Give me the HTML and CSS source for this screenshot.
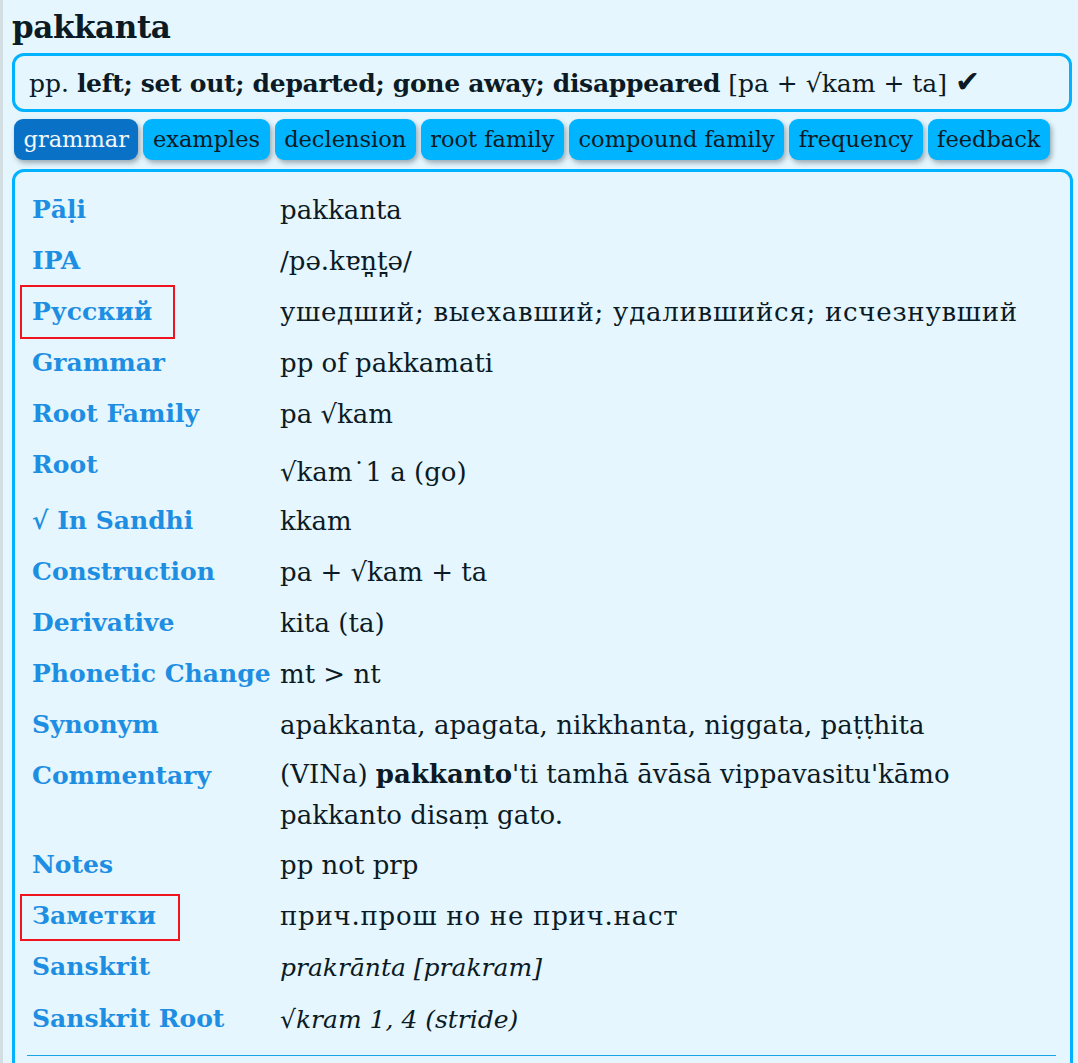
FILE: index.html
```html
<!DOCTYPE html>
<html lang="en">
<head>
<meta charset="utf-8">
<title>pakkanta</title>
<link rel="stylesheet" href="styles.css">
</head>
<body>
<div class="page">
  <h1 class="headword">pakkanta</h1>
  <div class="summary">pp. <b>left; set out; departed; gone away; disappeared</b> [pa + √kam + ta] <span class="check">✔</span></div>
  <nav class="tabs">
    <span class="tab active">grammar</span>
    <span class="tab">examples</span>
    <span class="tab">declension</span>
    <span class="tab">root family</span>
    <span class="tab">compound family</span>
    <span class="tab">frequency</span>
    <span class="tab">feedback</span>
  </nav>
  <section class="panel">
    <div class="grammar">
      <div class="row"><div class="label">Pāḷi</div><div class="value">pakkanta</div></div>
      <div class="row"><div class="label">IPA</div><div class="value">/pə.kɐn̪t̪ə/</div></div>
      <div class="row"><div class="label"><span class="mark mark-ru">Русский</span></div><div class="value cyr">ушедший; выехавший; удалившийся; исчезнувший</div></div>
      <div class="row"><div class="label">Grammar</div><div class="value">pp of pakkamati</div></div>
      <div class="row"><div class="label">Root Family</div><div class="value">pa √kam</div></div>
      <div class="row root-row"><div class="label">Root</div><div class="value">√kam˙1 a (go)</div></div>
      <div class="row"><div class="label">√ In Sandhi</div><div class="value">kkam</div></div>
      <div class="row"><div class="label">Construction</div><div class="value">pa + √kam + ta</div></div>
      <div class="row"><div class="label">Derivative</div><div class="value">kita (ta)</div></div>
      <div class="row"><div class="label">Phonetic Change</div><div class="value">mt &gt; nt</div></div>
      <div class="row"><div class="label">Synonym</div><div class="value">apakkanta, apagata, nikkhanta, niggata, paṭṭhita</div></div>
      <div class="row comm-row"><div class="label">Commentary</div><div class="value">(VINa) <b>pakkanto</b>'ti tamhā āvāsā vippavasitu'kāmo pakkanto disaṃ gato.</div></div>
      <div class="row"><div class="label">Notes</div><div class="value">pp not prp</div></div>
      <div class="row"><div class="label"><span class="mark mark-notes">Заметки</span></div><div class="value cyr">прич.прош но не прич.наст</div></div>
      <div class="row"><div class="label">Sanskrit</div><div class="value"><i>prakrānta [prakram]</i></div></div>
      <div class="row"><div class="label">Sanskrit Root</div><div class="value"><i>√kram 1, 4 (stride)</i></div></div>
    </div>
    <hr class="rule">
  </section>
</div>
</body>
</html>
```
FILE: styles.css
```css
html, body {
  margin: 0;
  padding: 0;
}
body {
  background: #d3dee3;
  font-family: "DejaVu Serif", "Liberation Serif", serif;
  color: #0b1a24;
}
.page {
  margin-left: 3px;
  background: #e5f6fe;
  min-height: 1063px;
  padding: 1px 5px 0 9px;
  overflow: hidden;
}
.headword {
  margin: 6px 0 0 0;
  font-size: 31px;
  line-height: 40px;
  font-weight: bold;
  letter-spacing: -0.4px;
}
.summary {
  margin-top: 6px;
  border: 3px solid #00b2ff;
  border-radius: 12px;
  padding: 10px 14px 7px 14px;
  font-size: 25px;
  line-height: 36px;
  width: 1026px;
}
.summary b {
  letter-spacing: -0.3px;
}
.check {
  font-size: 30px;
  line-height: 30px;
}
.tabs {
  display: flex;
  gap: 5px;
  margin: 7px 0 0 2px;
}
.tab {
  background: #00b4ff;
  color: #0b1a24;
  font-size: 22.5px;
  line-height: 41px;
  padding: 0 9.5px;
  border-radius: 9px;
  box-shadow: 2px 3px 5px rgba(60, 80, 90, 0.45);
}
.tab.active {
  background: #0a72c6;
  color: #f2f8fc;
}
.panel {
  margin-top: 9px;
  border: 3px solid #00b2ff;
  border-radius: 12px;
  width: 1055px;
  padding: 12px 0 0 0;
  min-height: 900px;
}
.grammar {
  margin-left: 17px;
  line-height: 44px;
}
.row {
  display: grid;
  grid-template-columns: 248px 760px;
  padding: 3.5px 0;
}
.label {
  font-size: 25px;
  font-weight: bold;
  color: #1e8ee2;
  white-space: nowrap;
}
.value {
  font-size: 26px;
}
.value i {
  font-size: 25px;
}
.cyr {
  letter-spacing: 0.75px;
}
.root-row {
  padding-bottom: 1.5px;
}
.root-row .value {
  padding-top: 7px;
}
.comm-row .value {
  line-height: 41px;
}
.mark {
  position: relative;
}
.mark::after {
  content: "";
  position: absolute;
  left: -12px;
  border: 2px solid #f0141e;
}
.mark-ru::after {
  top: -12px;
  width: 151px;
  height: 50px;
}
.mark-notes::after {
  top: -7px;
  width: 156px;
  height: 43px;
}
.rule {
  margin: 10px 14px 0 12px;
  border: 0;
  border-top: 1px solid #1aa6e6;
}
```
